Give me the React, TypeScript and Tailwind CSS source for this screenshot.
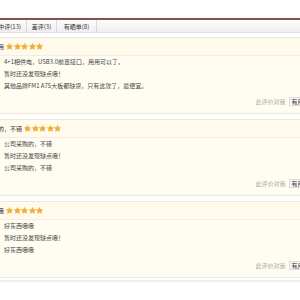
const font = { fontFamily: '"Noto Sans CJK SC", "Liberation Sans", sans-serif' }

type Review = {
  title: string
  titleEnd: number
  lines: string[]
}

const REVIEWS: Review[] = [
  {
    title: '性价比高，好用',
    titleEnd: 4,
    lines: ['4+1相供电，USB3.0前置接口，用用可以了。', '暂时还没发现缺点哦！', '其他品牌FM1 A75大板都缺货，只有这款了，最便宜。'],
  },
  {
    title: '公司采购的，不错',
    titleEnd: 22,
    lines: ['公司采购的，不错', '暂时还没发现缺点哦！', '公司采购的，不错'],
  },
  {
    title: '好东西哦哦',
    titleEnd: 4,
    lines: ['好东西哦哦', '暂时还没发现缺点哦！', '好东西哦哦'],
  },
]

function Star() {
  return (
    <svg width="7" height="7" viewBox="0 0 24 24">
      <path
        d="M12 1.5l3.2 6.9 7.3.8-5.5 5 1.6 7.3L12 17.8l-6.6 3.7 1.6-7.3-5.5-5 7.3-.8z"
        fill="#f6b02e"
        stroke="#e3951a"
        strokeWidth="1.5"
        strokeLinejoin="round"
      />
    </svg>
  )
}

function ReviewBlock({ review }: { review: Review }) {
  return (
    <div className="bg-[#fffcf2] border-y border-[#ece8dc]">
      {/* 标题 + 评分 */}
      <div className="h-[18px] flex items-center bg-[#fffaec] border-b border-[#f3eedf]">
        <div className="flex justify-end shrink-0" style={{ width: review.titleEnd }}>
          <span className="whitespace-nowrap text-[6px] text-[#333]">{review.title}</span>
        </div>
        <div className="flex gap-[0.5px] ml-[2px]">
          <Star />
          <Star />
          <Star />
          <Star />
          <Star />
        </div>
      </div>

      {/* 内容 */}
      <div className="pl-[4px]">
        {review.lines.map((line, i) => (
          <div key={i} className="h-[12px] leading-[12px] text-[6px] text-[#444] whitespace-nowrap">
            {line}
          </div>
        ))}
      </div>

      {/* 有用 */}
      <div className="flex justify-end items-center gap-[3px] h-[14px] mt-[2px] mb-[5px] -mr-[14px]">
        <span className="text-[6px] text-[#aaa]">此评价对我</span>
        <span className="h-[9px] px-[2px] flex items-center border border-[#ddd] bg-[#f6f6f6] text-[6px] text-[#333]">
          有用(0)
        </span>
      </div>
    </div>
  )
}

export default function App() {
  return (
    <div className="w-[300px] h-[300px] overflow-hidden bg-white" style={font}>
      <div className="h-[18px]" />
      <div className="h-[2px] bg-[#8a4d4d]" />

      {/* 标签栏 */}
      <div className="h-[13px] flex bg-gradient-to-b from-[#fdfdfd] to-[#efefef] border-b border-[#e2e2e2]">
        <div className="w-[40px] -ml-[13px] pr-[5px] flex items-center justify-end border-r border-[#dadada] text-[6px] text-[#333]">
          中评(13)
        </div>
        <div className="w-[30px] flex items-center justify-center border-r border-[#dadada] text-[6px] text-[#333]">
          差评(3)
        </div>
        <div className="w-[40px] flex items-center justify-center border-r border-[#dadada] text-[6px] text-[#333]">
          有晒单(8)
        </div>
      </div>

      <div className="h-[4px]" />

      <div className="flex flex-col gap-[5px]">
        {REVIEWS.map((r, i) => (
          <ReviewBlock key={i} review={r} />
        ))}
      </div>

      <div className="h-[2px]" />
      <div className="h-[2px] bg-[#eeeeee]" />
    </div>
  )
}
